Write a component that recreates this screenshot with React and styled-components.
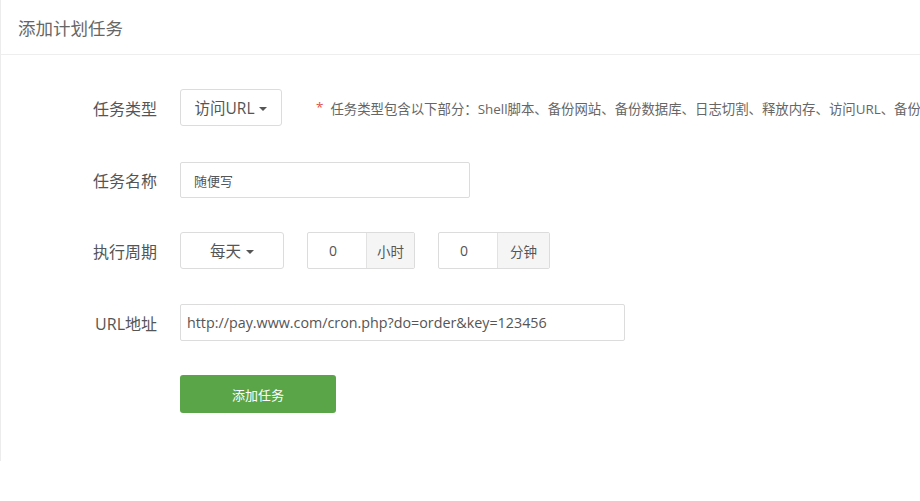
import React from "react";
import styled, { createGlobalStyle } from "styled-components";

const Global = createGlobalStyle`
  html, body { margin: 0; padding: 0; background: #fff; }
  body { font-family: "Open Sans", "Noto Sans CJK SC", sans-serif; color: #555; }
`;

const Panel = styled.div`
  width: 920px;
  height: 461px;
  box-sizing: border-box;
  border-left: 1px solid #ececec;
  background: #fff;
  overflow: hidden;
`;

const Header = styled.div`
  height: 55px;
  box-sizing: border-box;
  border-bottom: 1px solid #eeeeee;
  display: flex;
  align-items: center;
  padding-left: 17px;
  font-size: 17.5px;
  color: #666;
`;

const Form = styled.div`
  display: flex;
  flex-direction: column;
`;

const Row = styled.div`
  display: flex;
  align-items: center;
  height: ${p => p.$h || 37}px;
  margin-top: ${p => p.$mt}px;
`;

const Label = styled.div`
  width: 156px;
  margin-right: 23px;
  text-align: right;
  font-size: 16px;
  color: #555;
  flex-shrink: 0;
`;

const SelectBtn = styled.div`
  box-sizing: border-box;
  height: 37px;
  width: ${p => p.$w}px;
  border: 1px solid #dcdcdc;
  border-radius: 3px;
  display: flex;
  align-items: center;
  justify-content: center;
  gap: 5px;
  font-size: 15.5px;
  color: #555;
  background: #fff;
  flex-shrink: 0;
`;

const Caret = styled.span`
  display: inline-block;
  width: 0;
  height: 0;
  border-left: 4px solid transparent;
  border-right: 4px solid transparent;
  border-top: 4px solid #555;
  margin-top: 2px;
`;

const Hint = styled.div`
  margin-left: 34px;
  font-size: 13.4px;
  color: #666;
  white-space: nowrap;
  display: flex;
  gap: 7px;
`;

const Star = styled.span`
  color: #e0524a;
`;

const TextInput = styled.div`
  box-sizing: border-box;
  height: ${p => p.$h || 37}px;
  width: ${p => p.$w}px;
  border: 1px solid #dcdcdc;
  border-radius: 2px;
  display: flex;
  align-items: center;
  padding-left: ${p => p.$pl || 12}px;
  font-size: ${p => p.$fs || 13}px;
  color: #555;
`;

const Group = styled.div`
  display: flex;
  height: 37px;
  box-sizing: border-box;
  border: 1px solid #dcdcdc;
  border-radius: 2px;
  margin-left: ${p => p.$ml}px;
  flex-shrink: 0;
`;

const GroupField = styled.div`
  width: 59px;
  box-sizing: border-box;
  display: flex;
  align-items: center;
  padding-left: 21px;
  font-size: 14px;
  color: #555;
  border-right: 1px solid #e2e2e2;
`;

const AddOn = styled.div`
  width: ${p => p.$w}px;
  background: #f5f5f5;
  display: flex;
  align-items: center;
  justify-content: center;
  font-size: 13.5px;
  color: #555;
`;

const Submit = styled.div`
  margin-left: 179px;
  width: 156px;
  height: 38px;
  border-radius: 3px;
  background: #5aa547;
  color: #fff;
  font-size: 13px;
  display: flex;
  align-items: center;
  justify-content: center;
`;

export default function App() {
  return (
    <>
      <Global />
      <Panel>
        <Header>添加计划任务</Header>
        <Form>
          <Row $mt={34}>
            <Label>任务类型</Label>
            <SelectBtn $w={102}>访问URL <Caret /></SelectBtn>
            <Hint>
              <Star>*</Star>
              <span>任务类型包含以下部分：Shell脚本、备份网站、备份数据库、日志切割、释放内存、访问URL、备份</span>
            </Hint>
          </Row>
          <Row $mt={36} $h={36}>
            <Label>任务名称</Label>
            <TextInput $w={290} $h={36} $pl={13}>随便写</TextInput>
          </Row>
          <Row $mt={34}>
            <Label>执行周期</Label>
            <SelectBtn $w={104}>每天 <Caret /></SelectBtn>
            <Group $ml={23}>
              <GroupField>0</GroupField>
              <AddOn $w={47}>小时</AddOn>
            </Group>
            <Group $ml={23}>
              <GroupField>0</GroupField>
              <AddOn $w={51}>分钟</AddOn>
            </Group>
          </Row>
          <Row $mt={35}>
            <Label>URL地址</Label>
            <TextInput $w={445} $pl={6} $fs={14.3}>http://pay.www.com/cron.php?do=order&amp;key=123456</TextInput>
          </Row>
          <Row $mt={34} $h={38}>
            <Submit>添加任务</Submit>
          </Row>
        </Form>
      </Panel>
    </>
  );
}
